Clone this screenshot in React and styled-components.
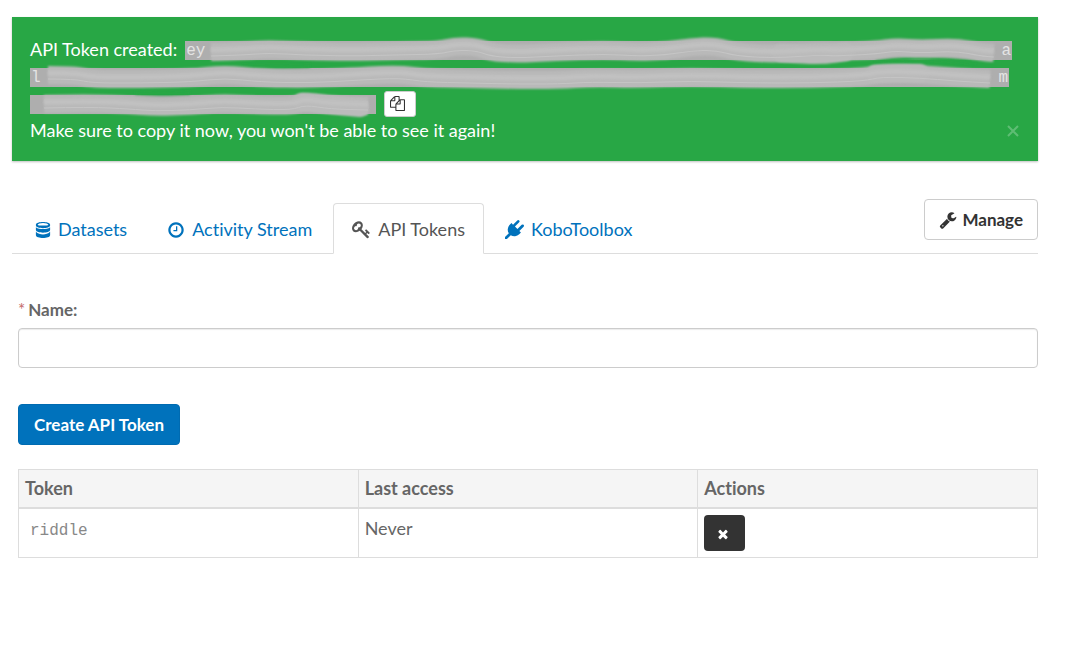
import React from "react";
import styled, { createGlobalStyle } from "styled-components";

const Global = createGlobalStyle`
  *, *::before, *::after { box-sizing: border-box; }
  body {
    margin: 0;
    background: #fff;
    color: #555;
    font: 18px/27px Lato, sans-serif;
    font-variant-ligatures: none;
  }
  button, input { font: inherit; font-variant-ligatures: none; margin: 0; }
  button { cursor: pointer; }
`;

const Page = styled.main`
  padding: 17px 52px 48px 12px;
`;

const Alert = styled.section`
  position: relative;
  padding: 19px 26px 17px 18px;
  background: #28a745;
  color: #fff;
  box-shadow: 0 1px 2px rgba(0, 0, 0, 0.25);
`;

const Line = styled.div`
  display: flex;
  align-items: center;
  gap: 8px;
  height: 27px;
  padding-right: ${(p) => p.$inset || 0}px;
`;

const TokenBar = styled.code`
  position: relative;
  display: flex;
  justify-content: space-between;
  flex: ${(p) => (p.$width ? `0 0 ${p.$width}` : "1 1 0")};
  height: 19px;
  margin-top: 2px;
  padding: 0 1px;
  background: #aeaeae;
  color: #e4e4e4;
  font: 16px/21px "Liberation Mono", monospace;
`;

const Smear = styled.svg`
  position: absolute;
  left: 0;
  top: -6px;
  width: 100%;
  height: 31px;
  overflow: visible;
`;

const CopyButton = styled.button`
  display: flex;
  align-items: center;
  width: 32px;
  height: 26px;
  padding: 0 5px;
  border: 1px solid #ccc;
  border-radius: 3px;
  background: #fff;
  color: #333;
`;

const CloseButton = styled.button`
  position: absolute;
  right: 18px;
  bottom: 18px;
  padding: 0;
  border: 0;
  background: none;
  color: #fff;
  opacity: 0.25;
  width: 14px;
  height: 24px;
`;

const TabBar = styled.nav`
  display: flex;
  align-items: flex-end;
  height: 55px;
  margin-top: 38px;
  border-bottom: 1px solid #ddd;
`;

const Tab = styled.a`
  display: flex;
  align-items: center;
  gap: 7px;
  height: 51px;
  margin: 0 2px -1px 0;
  padding: 2px 18px 0;
  border: 1px solid ${(p) => (p.$active ? "#ddd" : "transparent")};
  border-bottom-color: ${(p) => (p.$active ? "#fff" : "transparent")};
  border-radius: 4px 4px 0 0;
  background: ${(p) => (p.$active ? "#fff" : "transparent")};
  color: ${(p) => (p.$active ? "#555" : "#0072bc")};
  text-decoration: none;
  white-space: nowrap;
  &:first-child { margin-left: 4px; }
`;

const ManageButton = styled.button`
  display: flex;
  align-items: center;
  gap: 5px;
  align-self: flex-start;
  height: 41px;
  margin-left: auto;
  padding: 0 14px;
  border: 1px solid #ccc;
  border-radius: 4px;
  background: #fff;
  color: #333;
  font-size: 17px;
  font-weight: 700;
`;

const Content = styled.div`
  padding: 42px 0 0 6px;
`;

const Label = styled.label`
  display: flex;
  gap: 3px;
  height: 27px;
  margin-bottom: 5px;
  color: #666;
  font-size: 17px;
  font-weight: 700;
`;

const Required = styled.span`
  color: #c46b6b;
  font-weight: 400;
`;

const TextInput = styled.input`
  display: block;
  width: 100%;
  height: 40px;
  padding: 6px 12px;
  border: 1px solid #ccc;
  border-radius: 4px;
  background: #fff;
  box-shadow: inset 0 1px 1px rgba(0, 0, 0, 0.08);
`;

const SubmitButton = styled.button`
  display: block;
  height: 41px;
  margin: 36px 0 24px;
  padding: 0 15px;
  border: 1px solid #006bb1;
  border-radius: 4px;
  background: #0072bc;
  color: #fff;
  font-size: 17px;
  font-weight: 700;
`;

const Table = styled.table`
  width: 100%;
  table-layout: fixed;
  border-collapse: collapse;
  color: #666;
  th, td {
    border: 1px solid #ddd;
    text-align: left;
    vertical-align: top;
  }
  th {
    padding: 5px 6px;
    border-bottom-width: 2px;
    background: #f5f5f5;
    font-weight: 700;
  }
  td { padding: 6px; }
`;

const TokenName = styled.code`
  display: block;
  padding: 3px 5px 0;
  color: #888;
  font: 16px/27px "Liberation Mono", monospace;
`;

const DeleteButton = styled.button`
  display: flex;
  align-items: center;
  width: 41px;
  height: 36px;
  padding: 2px 12px 0;
  border: 0;
  border-radius: 4px;
  background: #333;
  color: #fff;
`;

const Glyph = styled.svg`
  display: block;
  flex: none;
  width: ${(p) => p.$size}px;
  height: ${(p) => p.$size}px;
  fill: currentColor;
`;

const paths = {
  clock:
    "M1024 544v448q0 14-9 23t-23 9h-320q-14 0-23-9t-9-23v-64q0-14 9-23t23-9h224v-352q0-14 9-23t23-9h64q14 0 23 9t9 23zm416 352q0-148-73-273t-198-198-273-73-273 73-198 198-73 273 73 273 198 198 273 73 273-73 198-198 73-273zm224 0q0 209-103 385.5t-279.5 279.5-385.5 103-385.5-103-279.5-279.5-103-385.5 103-385.5 279.5-279.5 385.5-103 385.5 103 279.5 279.5 103 385.5z",
  key: "M832 512q0-80-56-136t-136-56-136 56-56 136q0 42 19 83-41-19-83-19-80 0-136 56t-56 136 56 136 136 56 136-56 56-136q0-42-19-83 41 19 83 19 80 0 136-56t56-136zm851 704q0 17-49 66t-66 49q-9 0-28.5-16t-36.5-33-38.5-40-24.5-26l-96 96 220 220q28 28 28 68 0 42-39 81t-81 39q-40 0-68-28l-671-671q-176 131-365 131-163 0-265.5-102.5t-102.5-265.5q0-160 95-313t248-248 313-95q163 0 265.5 102.5t102.5 265.5q0 189-131 365l355 355 96-96q-3-3-26-24.5t-40-38.5-33-36.5-16-28.5q0-17 49-66t66-49q13 0 23 10 6 6 46 44.5t82 79.5 86.5 86 73 78 28.5 41z",
  plug: "M1755 453q37 38 37 90.5t-37 90.5l-401 400 150 150-160 160q-163 163-389.5 186.5t-411.5-100.5l-362 362h-181v-181l362-362q-124-185-100.5-411.5t186.5-389.5l160-160 150 150 400-401q38-37 91-37t90 37 37 90.5-37 90.5l-400 401 234 234 401-400q38-37 91-37t90 37z",
  wrench:
    "M448 1472q0-26-19-45t-45-19-45 19-19 45 19 45 45 19 45-19 19-45zm644-420l-682 682q-37 37-90 37-52 0-91-37l-106-108q-38-36-38-90 0-53 38-91l681-681q39 98 114.5 173.5t173.5 114.5zm634-435q0 39-23 106-47 134-164.5 217.5t-258.5 83.5q-185 0-316.5-131.5t-131.5-316.5 131.5-316.5 316.5-131.5q58 0 121.5 16.5t107.5 46.5q16 11 16 28t-16 28l-293 169v224l193 107q5-3 79-48.5t135.5-81 70.5-35.5q15 0 23.5 10t8.5 25z",
  files:
    "M1696 384q40 0 68 28t28 68v1216q0 40-28 68t-68 28h-960q-40 0-68-28t-28-68v-288h-544q-40 0-68-28t-28-68v-672q0-40 20-88t48-76l408-408q28-28 76-48t88-20h416q40 0 68 28t28 68v328q68-40 128-40h416zm-544 213l-299 299h299v-299zm-640-384l-299 299h299v-299zm196 647l316-316v-416h-384v416q0 40-28 68t-68 28h-416v640h512v-256q0-40 20-88t48-76zm956 804v-1152h-384v416q0 40-28 68t-68 28h-416v640h896z",
  times:
    "M1490 1322q0 40-28 68l-136 136q-28 28-68 28t-68-28l-294-294-294 294q-28 28-68 28t-68-28l-136-136q-28-28-28-68t28-68l294-294-294-294q-28-28-28-68t28-68l136-136q28-28 68-28t68 28l294 294 294-294q28-28 68-28t68 28l136 136q28 28 28 68t-28 68l-294 294 294 294q28 28 28 68z",
};

const Icon = ({ name, size = 18 }) => (
  <Glyph viewBox="0 0 1792 1792" $size={size} aria-hidden="true">
    <path d={paths[name]} />
  </Glyph>
);

const DatabaseIcon = () => (
  <Glyph viewBox="0 0 16 18" $size={16} aria-hidden="true">
    <path
      fillRule="evenodd"
      d="M8 0C12 0 16 1 16 3V4C16 6 12 7 8 7S0 6 0 4V3C0 1 4 0 8 0ZM8 1C5 1 2 2 2 3S5 4 8 4S14 4 14 3S11 1 8 1Z"
    />
    <path d="M0 6C2 8 5 8 8 8S14 8 16 6V9C16 11 12 12 8 12S0 11 0 9Z" />
    <path d="M0 11C2 13 5 14 8 14S14 13 16 11V15C16 17 12 18 8 18S0 17 0 15Z" />
  </Glyph>
);

// Brush strokes that hide the secret part of the token, one set per line.
const smears = [
  {
    width: 826,
    body: [[26, 17], [60, 16], [82, 14], [120, 16], [165, 17], [210, 16], [255, 15], [270, 11], [292, 12], [305, 17], [330, 19], [370, 17], [420, 15], [450, 17], [480, 16], [505, 12], [530, 11], [550, 17], [590, 19], [635, 16], [650, 17], [690, 15], [710, 12], [735, 14], [770, 12], [795, 17], [808, 18]],
    tail: [[595, 18], [620, 20], [640, 20], [660, 17]],
    clear: [[690, 27], [720, 23], [750, 24], [790, 27]],
  },
  {
    width: 979,
    body: [[18, 13], [45, 13], [62, 17], [110, 17], [160, 16], [195, 12], [230, 16], [280, 17], [330, 14], [370, 12], [395, 16], [440, 17], [480, 18], [530, 18], [560, 16], [610, 17], [660, 15], [720, 17], [780, 17], [835, 15], [850, 11], [890, 12], [925, 15], [960, 17]],
    tail: [[845, 12], [865, 11], [890, 11]],
    clear: [[213, 4], [240, 5], [280, 4]],
  },
  {
    width: 346,
    body: [[14, 15], [60, 14], [100, 16], [124, 18], [160, 17], [192, 14], [225, 16], [262, 17], [275, 12], [300, 16], [338, 17]],
    tail: [[272, 13], [290, 15], [330, 19]],
    clear: [[105, 4], [130, 5], [160, 4]],
  },
];

// Smooth curve that bends towards each point and passes the midpoints.
const curve = (pts, shift = 0) => {
  const p = pts.map(([x, y]) => [x, y + shift]);
  let d = `M${p[0]}`;
  for (let i = 1; i < p.length - 1; i += 1) {
    d += `Q${p[i]} ${(p[i][0] + p[i + 1][0]) / 2},${(p[i][1] + p[i + 1][1]) / 2}`;
  }
  return `${d}L${p[p.length - 1]}`;
};

const SmearLine = ({ index }) => {
  const s = smears[index];
  const soft = `url(#soft${index})`;
  return (
    <Smear viewBox={`0 0 ${s.width} 31`} preserveAspectRatio="none" fill="none" aria-hidden="true">
      <defs>
        <filter id={`soft${index}`} filterUnits="userSpaceOnUse" x="-10" y="-10" width={s.width + 20} height="50">
          <feGaussianBlur stdDeviation="1" />
        </filter>
      </defs>
      <path d={curve(s.clear)} stroke="#28a745" strokeWidth="4" filter={soft} />
      <path d={curve(s.body)} stroke="#b9b9b9" strokeWidth="18" filter={soft} />
      <path d={curve(s.tail)} stroke="#bbbbbb" strokeWidth="18" strokeLinecap="round" filter={soft} />
      <path d={curve(s.body, -2)} stroke="#c1c1c1" strokeWidth="5" filter={soft} />
      <path d={curve(s.body, 4)} stroke="#c5c5c5" strokeWidth="1" />
      <path d={curve(s.body, -4)} stroke="#bfbfbf" strokeWidth="1" />
    </Smear>
  );
};

export default function App() {
  return (
    <>
      <Global />
      <Page>
        <Alert role="status">
          <Line>
            <span>API Token created:</span>
            <TokenBar>
              <SmearLine index={0} />
              <span>ey</span>
              <span>a</span>
            </TokenBar>
          </Line>
          <Line $inset={3}>
            <TokenBar>
              <SmearLine index={1} />
              <span>l</span>
              <span>m</span>
            </TokenBar>
          </Line>
          <Line>
            <TokenBar $width="346px">
              <SmearLine index={2} />
            </TokenBar>
            <CopyButton type="button" aria-label="Copy token">
              <Icon name="files" size={15} />
            </CopyButton>
          </Line>
          <Line>Make sure to copy it now, you won't be able to see it again!</Line>
          <CloseButton type="button" aria-label="Close">
            <Glyph viewBox="0 0 14 14" $size={14}>
              <path d="M2 2L12 12M12 2L2 12" stroke="currentColor" strokeWidth="2" />
            </Glyph>
          </CloseButton>
        </Alert>

        <TabBar>
          <Tab href="#datasets"><DatabaseIcon />Datasets</Tab>
          <Tab href="#activity"><Icon name="clock" />Activity Stream</Tab>
          <Tab href="#tokens" $active aria-current="page"><Icon name="key" size={19} />API Tokens</Tab>
          <Tab href="#kobo"><Icon name="plug" size={19} />KoboToolbox</Tab>
          <ManageButton type="button"><Icon name="wrench" />Manage</ManageButton>
        </TabBar>

        <Content>
          <form onSubmit={(e) => e.preventDefault()}>
            <Label htmlFor="name"><Required>*</Required>Name:</Label>
            <TextInput id="name" name="name" type="text" />
            <SubmitButton type="submit">Create API Token</SubmitButton>
          </form>
          <Table>
            <thead>
              <tr><th>Token</th><th>Last access</th><th>Actions</th></tr>
            </thead>
            <tbody>
              <tr>
                <td><TokenName>riddle</TokenName></td>
                <td>Never</td>
                <td>
                  <DeleteButton type="button" aria-label="Revoke token">
                    <Icon name="times" size={14} />
                  </DeleteButton>
                </td>
              </tr>
            </tbody>
          </Table>
        </Content>
      </Page>
    </>
  );
}
